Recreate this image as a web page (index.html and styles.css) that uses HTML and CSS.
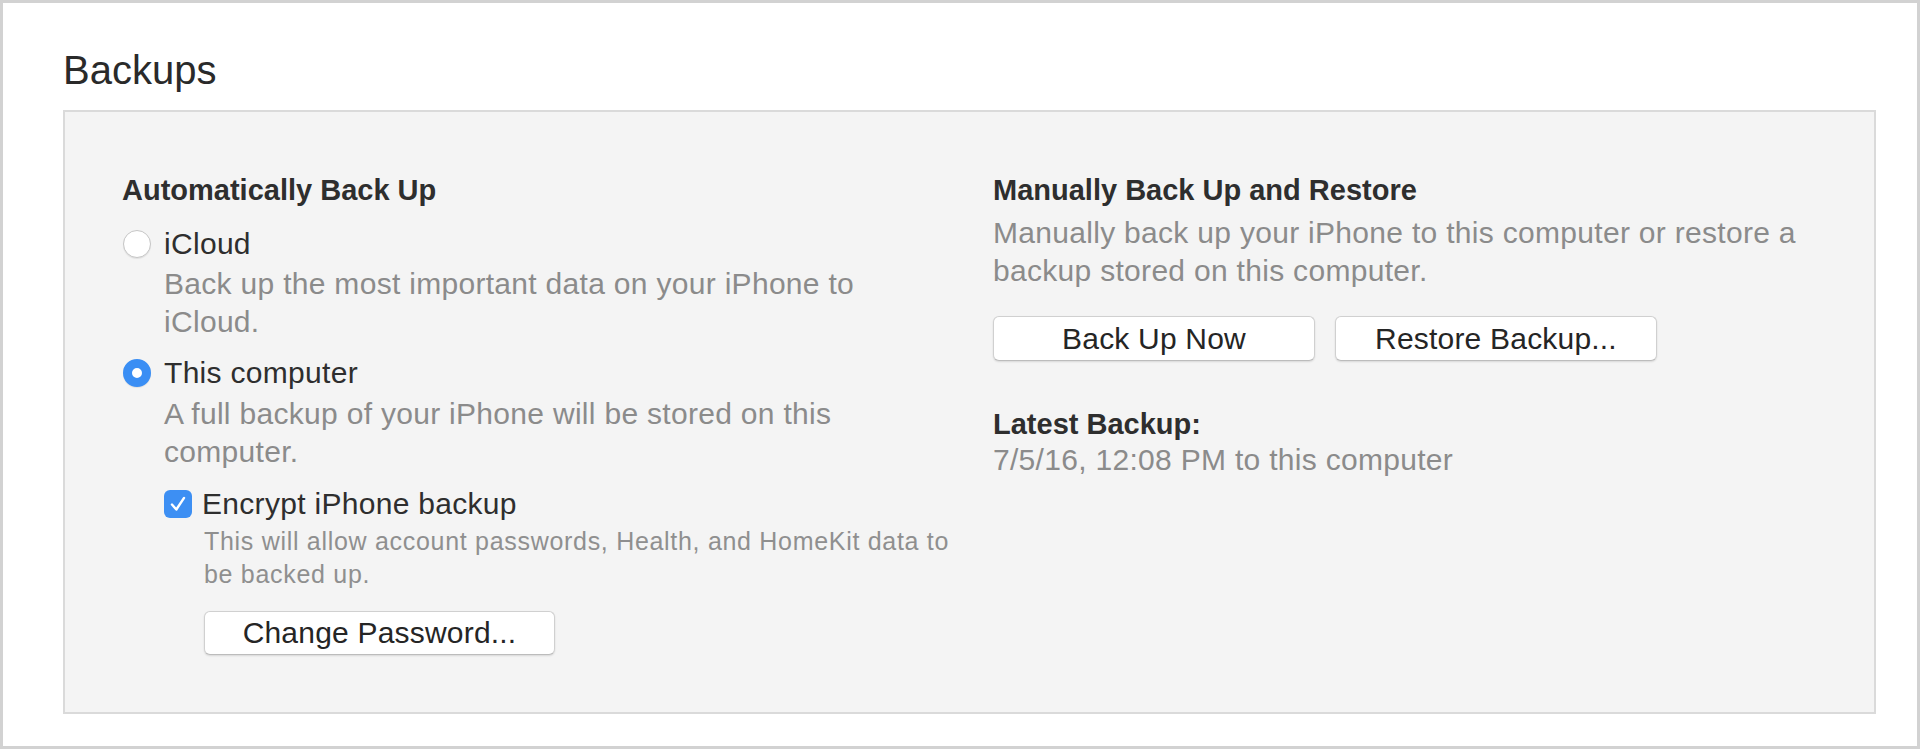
FILE: index.html
```html
<!DOCTYPE html>
<html lang="en">

<head>
    <meta charset="UTF-8">
    <meta name="viewport" content="width=device-width, initial-scale=1.0">
    <title>Backups</title>
    <link rel="stylesheet" href="styles.css">
</head>

<body>
    <div class="moldura">
        <h1 class="titulo">Backups</h1>

        <div class="painel">
            <div class="coluna">
                <h2 class="coluna__titulo">Automatically Back Up</h2>

                <div class="opcao">
                    <span class="radio"></span>
                    <label class="opcao__texto">iCloud</label>
                </div>
                <p class="descricao">Back up the most important data on your iPhone to iCloud.</p>

                <div class="opcao opcao--segunda">
                    <span class="radio radio--marcado"></span>
                    <label class="opcao__texto">This computer</label>
                </div>
                <p class="descricao descricao--segunda">A full backup of your iPhone will be stored on this computer.</p>

                <div class="cripto">
                    <div class="opcao">
                        <span class="caixa">
                            <svg width="22" height="22" viewBox="0 0 20 20">
                                <polyline points="4.5,10.5 8.5,15 15.5,4.5" fill="none" stroke="#fff" stroke-width="2.2"
                                    stroke-linecap="round" stroke-linejoin="round" />
                            </svg>
                        </span>
                        <label class="opcao__texto">Encrypt iPhone backup</label>
                    </div>
                    <p class="descricao-menor">This will allow account passwords, Health, and HomeKit data to be backed up.</p>
                    <button class="botao botao--senha">Change Password...</button>
                </div>
            </div>

            <div class="coluna">
                <h2 class="coluna__titulo">Manually Back Up and Restore</h2>
                <p class="descricao descricao--direita">Manually back up your iPhone to this computer or restore a backup stored on this computer.</p>

                <div class="botoes">
                    <button class="botao botao--direita">Back Up Now</button>
                    <button class="botao botao--direita">Restore Backup...</button>
                </div>

                <h2 class="ultimo__titulo">Latest Backup:</h2>
                <p class="ultimo__data">7/5/16, 12:08 PM to this computer</p>
            </div>
        </div>
    </div>
</body>

</html>
```

FILE: styles.css
```css
body {
    margin: 0;
    background-color: #fff;
    font-family: "Liberation Sans", Arial, sans-serif;
}

.moldura {
    width: 1920px;
    height: 749px;
    box-sizing: border-box;
    border: 3px solid #d2d2d2;
    padding: 44px 0 0 60px;
}

.titulo {
    margin: 0;
    font-size: 40px;
    font-weight: 400;
    line-height: 46px;
    color: #2a2a2a;
}

.painel {
    width: 1813px;
    box-sizing: border-box;
    margin-top: 17px;
    display: grid;
    grid-template-columns: 832px 1fr;
    column-gap: 39px;
    padding: 59px 58px 57px 57px;
    background-color: #f4f4f4;
    border: 2px solid #dadada;
}

.coluna__titulo,
.ultimo__titulo {
    margin: 0;
    font-size: 29px;
    font-weight: 700;
    line-height: 38px;
    color: #2e2e2e;
}

.opcao {
    display: flex;
    align-items: center;
    gap: 12px;
    height: 38px;
    margin-top: 16px;
}

.opcao--segunda {
    margin-top: 13px;
}

.opcao__texto {
    font-size: 30px;
    letter-spacing: 0.3px;
    color: #2e2e2e;
}

.radio {
    width: 28px;
    height: 28px;
    box-sizing: border-box;
    border: 1.5px solid #c6c6c6;
    border-radius: 50%;
    background-color: #fff;
    margin-left: 1px;
    margin-right: 1px;
    box-shadow: 0 1px 1px rgba(0, 0, 0, 0.08);
}

.radio--marcado {
    border: 9.5px solid #3a8ef4;
    background-color: #fff;
}

.caixa {
    width: 28px;
    height: 28px;
    border-radius: 6px;
    background-color: #3d8ff3;
    display: flex;
    align-items: center;
    justify-content: center;
}

.descricao {
    margin: 2px 0 0 42px;
    font-size: 30px;
    letter-spacing: 0.3px;
    line-height: 38px;
    color: #8b8b8b;
}

.descricao--segunda {
    margin-top: 3px;
}

.descricao--direita {
    margin: 5px 0 0 0;
}

.cripto {
    margin-left: 42px;
}

.cripto .opcao {
    margin-top: 14px;
    gap: 10px;
}

.descricao-menor {
    margin: 2px 0 0 40px;
    font-size: 25px;
    letter-spacing: 0.7px;
    line-height: 33px;
    color: #8f8f8f;
}

.botao {
    font-family: "Liberation Sans", Arial, sans-serif;
    font-size: 30px;
    letter-spacing: 0.2px;
    color: #252525;
    background-color: #fff;
    border: 1px solid #d0d0d0;
    border-bottom-color: #bcbcbc;
    border-radius: 6px;
    box-shadow: 0 1px 2px rgba(0, 0, 0, 0.12);
    padding: 0;
}

.botao--senha {
    display: block;
    margin: 20px 0 0 40px;
    width: 351px;
    height: 44px;
}

.botoes {
    display: flex;
    gap: 20px;
    margin-top: 26px;
}

.botao--direita {
    width: 322px;
    height: 45px;
}

.ultimo__titulo {
    margin-top: 45px;
    line-height: 36px;
}

.ultimo__data {
    margin: 0;
    font-size: 30px;
    letter-spacing: 0.3px;
    line-height: 36px;
    color: #8b8b8b;
}
```
